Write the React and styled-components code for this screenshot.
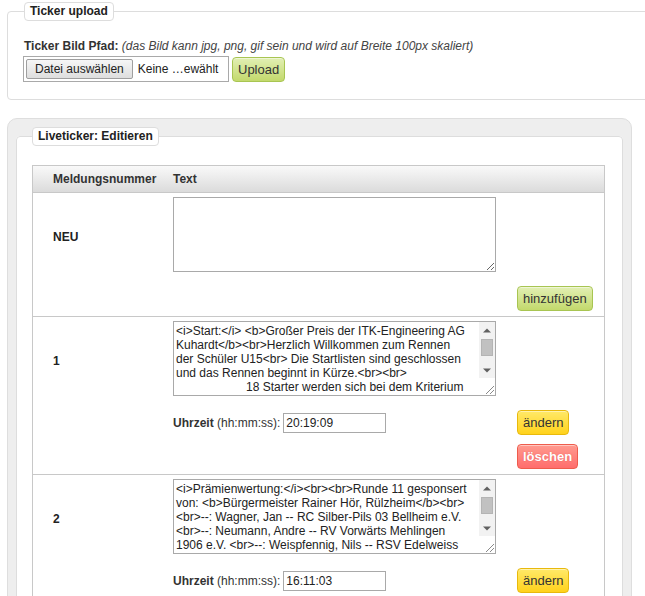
import React from "react";
import styled, { createGlobalStyle, css } from "styled-components";

const Global = createGlobalStyle`
  html, body { margin: 0; padding: 0; overflow: hidden; background: #fff; }
  body {
    font-family: "Liberation Sans", Arial, sans-serif;
    font-size: 12px;
    color: #333;
  }
`;

const Page = styled.div`
  padding: 2px 13px 0 7px;
`;

const Fieldset = styled.fieldset`
  margin: 0 -40px 0 0;
  padding: 18px 16px 17px;
  border: 1px solid #ddd;
  border-radius: 4px;
  background: #fff;
  min-width: 0;
`;

const Legend = styled.legend`
  padding: 1px 5px;
  border: 1px solid #ddd;
  border-radius: 4px;
  background: #fff;
  font-weight: bold;
  font-size: 12px;
  line-height: 15px;
  color: #222;
`;

const PathLine = styled.div`
  line-height: 14px;
  color: #333;
`;

const Hint = styled.i`
  color: #444;
`;

const UploadRow = styled.div`
  display: flex;
  align-items: center;
  gap: 3px;
  margin-top: 3px;
  margin-left: -1px;
`;

const FileBox = styled.div`
  display: flex;
  align-items: center;
  box-sizing: border-box;
  width: 206px;
  height: 26px;
  padding: 0 2px;
  border: 1px solid #a9a9a9;
  background: #fff;
`;

const FileButton = styled.span`
  display: flex;
  align-items: center;
  box-sizing: border-box;
  height: 20px;
  padding: 0 8px;
  border: 1px solid #9f9f9f;
  border-radius: 2px;
  background: linear-gradient(#f6f6f6, #dedede);
  color: #222;
`;

const FileName = styled.span`
  margin-left: 5px;
  color: #222;
`;

const tones = {
  green: css`
    background: linear-gradient(#e2efb4, #c3d96c);
    border-color: #a8c552;
    color: #333;
  `,
  yellow: css`
    background: linear-gradient(#ffe969, #ffd21c);
    border-color: #e8b90c;
    color: #333;
  `,
  red: css`
    background: linear-gradient(#ff9a8e, #ff6d6d);
    border-color: #ee5c4c;
    color: #fff;
    font-weight: bold;
    text-shadow: 0 0 1px rgba(200, 40, 40, 0.5);
  `,
};

const Button = styled.button`
  box-sizing: border-box;
  height: 25px;
  padding: 0 5px;
  border: 1px solid;
  border-radius: 4px;
  font-family: "Liberation Sans", Arial, sans-serif;
  font-size: 13px;
  box-shadow: inset 0 1px 0 rgba(255, 255, 255, 0.45);
  cursor: pointer;
  ${(p) => tones[p.$tone]}
`;

const Frame = styled.div`
  margin-top: 18px;
  padding: 8px;
  border: 1px solid #dedede;
  border-radius: 10px;
  background: #eee;
`;

const EditSet = styled.fieldset`
  margin: 0;
  padding: 19px 17px 0 15px;
  border: 1px solid #ddd;
  border-radius: 4px;
  background: #fff;
  min-width: 0;
`;

const Table = styled.div`
  border: 1px solid #c8c8c8;
  border-bottom: none;
  height: 500px;
`;

const Head = styled.div`
  display: grid;
  grid-template-columns: 140px 1fr;
  align-items: center;
  height: 26px;
  border-bottom: 1px solid #c8c8c8;
  background: linear-gradient(#f9f9f9, #dbdbdb);
  font-weight: bold;
  color: #333;
`;

const HeadCell = styled.div`
  padding-left: ${(p) => (p.$first ? "20px" : "0")};
`;

const Entry = styled.div`
  display: grid;
  grid-template-columns: 140px 344px 1fr;
  row-gap: 14px;
  padding: 4px 0 5px;
  & + & {
    border-top: 1px solid #c8c8c8;
  }
`;

const Label = styled.div`
  grid-column: 1;
  grid-row: 1;
  align-self: center;
  padding: 5px 0 0 20px;
  font-weight: bold;
  color: #222;
`;

const areaText = css`
  font-family: "Liberation Sans", Arial, sans-serif;
  font-size: 12px;
  line-height: 14px;
  color: #222;
  white-space: pre-wrap;
`;

const TextArea = styled.textarea`
  grid-column: 2;
  grid-row: 1;
  box-sizing: border-box;
  width: 323px;
  height: 75px;
  margin: 0;
  padding: 2px 0 2px 2px;
  border: 1px solid #a9a9a9;
  ${areaText}
`;

const ScrollBox = styled.div`
  grid-column: 2;
  grid-row: 1;
  display: flex;
  box-sizing: border-box;
  width: 323px;
  height: 75px;
  border: 1px solid #a9a9a9;
  background: #fff;
`;

const InnerArea = styled.textarea`
  flex: 1;
  min-width: 0;
  margin: 0;
  padding: 2px 0 2px 2px;
  border: none;
  outline: none;
  resize: none;
  overflow: hidden;
  ${areaText}
`;

const ScrollBar = styled.div`
  display: flex;
  flex-direction: column;
  width: 16px;
  flex: none;
  background: #f2f2f2;
`;

const ArrowBtn = styled.div`
  display: flex;
  align-items: center;
  justify-content: center;
  height: 16px;
  flex: none;
`;

const Thumb = styled.div`
  height: 17px;
  margin: 1px 2px 0;
  background: #c1c1c1;
  border: 1px solid #b4b4b4;
  box-sizing: border-box;
`;

const Track = styled.div`
  flex: 1;
`;

const Corner = styled.div`
  display: flex;
  align-items: flex-end;
  justify-content: flex-end;
  height: 17px;
  flex: none;
  background: #fff;
`;

const TimeLine = styled.div`
  grid-column: 2;
  grid-row: 2;
  display: flex;
  align-items: center;
  gap: 3px;
  height: 25px;
  color: #333;
`;

const TimeInput = styled.input`
  box-sizing: border-box;
  width: 103px;
  height: 20px;
  margin: 0;
  padding: 0 2px;
  border: 1px solid #a9a9a9;
  font-family: "Liberation Sans", Arial, sans-serif;
  font-size: 12px;
  color: #222;
`;

const Actions = styled.div`
  grid-column: 3;
  grid-row: 2;
  display: flex;
  flex-direction: column;
  align-items: flex-start;
  gap: 9px;
`;

const Arrow = ({ down }) => (
  <svg width="8" height="5" viewBox="0 0 8 5">
    <path d={down ? "M0 0.5 H8 L4 4.5 Z" : "M0 4.5 H8 L4 0.5 Z"} fill="#606060" />
  </svg>
);

const Grip = () => (
  <svg width="11" height="11" viewBox="0 0 11 11">
    <path d="M10 2 L2 10 M10 6 L6 10" stroke="#8a8a8a" strokeWidth="1" />
  </svg>
);

const ScrollArea = ({ value }) => (
  <ScrollBox>
    <InnerArea defaultValue={value} />
    <ScrollBar>
      <ArrowBtn>
        <Arrow />
      </ArrowBtn>
      <Thumb />
      <Track />
      <ArrowBtn>
        <Arrow down />
      </ArrowBtn>
      <Corner>
        <Grip />
      </Corner>
    </ScrollBar>
  </ScrollBox>
);

const text1 =
  "<i>Start:</i> <b>Großer Preis der ITK-Engineering AG\nKuhardt</b><br>Herzlich Willkommen zum Rennen\nder Schüler U15<br> Die Startlisten sind geschlossen\nund das Rennen beginnt in Kürze.<br><br>\n                     18 Starter werden sich bei dem Kriterium\nüber 40 Runden messen. Wir wünschen allen\nFahrern viel Erfolg und eine gute Fahrt!<br>\nDie Prämienwertungen werden hier\nlaufend bekannt gegeben.<br><br>\nViel Spaß beim Zuschauen!";

const text2 =
  "<i>Prämienwertung:</i><br><br>Runde 11 gesponsert\nvon: <b>Bürgermeister Rainer Hör, Rülzheim</b><br>\n<br>--: Wagner, Jan -- RC Silber-Pils 03 Bellheim e.V.\n<br>--: Neumann, Andre -- RV Vorwärts Mehlingen\n1906 e.V. <br>--: Weispfennig, Nils -- RSV Edelweiss\nHördt e.V.<br>\nDie Sieger erhalten ihre Prämien\nnach dem Rennen am Zielbereich.\nHerzlichen Glückwunsch!";

const entries = [
  { id: "1", text: text1, time: "20:19:09" },
  { id: "2", text: text2, time: "16:11:03" },
];

export default function App() {
  return (
    <Page>
      <Global />
      <Fieldset>
        <Legend>Ticker upload</Legend>
        <PathLine>
          <b>Ticker Bild Pfad:</b>{" "}
          <Hint>(das Bild kann jpg, png, gif sein und wird auf Breite 100px skaliert)</Hint>
        </PathLine>
        <UploadRow>
          <FileBox>
            <FileButton>Datei auswählen</FileButton>
            <FileName>Keine …ewählt</FileName>
          </FileBox>
          <Button $tone="green">Upload</Button>
        </UploadRow>
      </Fieldset>

      <Frame>
        <EditSet>
          <Legend>Liveticker: Editieren</Legend>
          <Table>
            <Head>
              <HeadCell $first>Meldungsnummer</HeadCell>
              <HeadCell>Text</HeadCell>
            </Head>
            <Entry>
              <Label>NEU</Label>
              <TextArea defaultValue="" />
              <Actions>
                <Button $tone="green">hinzufügen</Button>
              </Actions>
            </Entry>
            {entries.map((e) => (
              <Entry key={e.id}>
                <Label>{e.id}</Label>
                <ScrollArea value={e.text} />
                <TimeLine>
                  <span>
                    <b>Uhrzeit</b> (hh:mm:ss):
                  </span>
                  <TimeInput defaultValue={e.time} />
                </TimeLine>
                <Actions>
                  <Button $tone="yellow">ändern</Button>
                  <Button $tone="red">löschen</Button>
                </Actions>
              </Entry>
            ))}
          </Table>
        </EditSet>
      </Frame>
    </Page>
  );
}
